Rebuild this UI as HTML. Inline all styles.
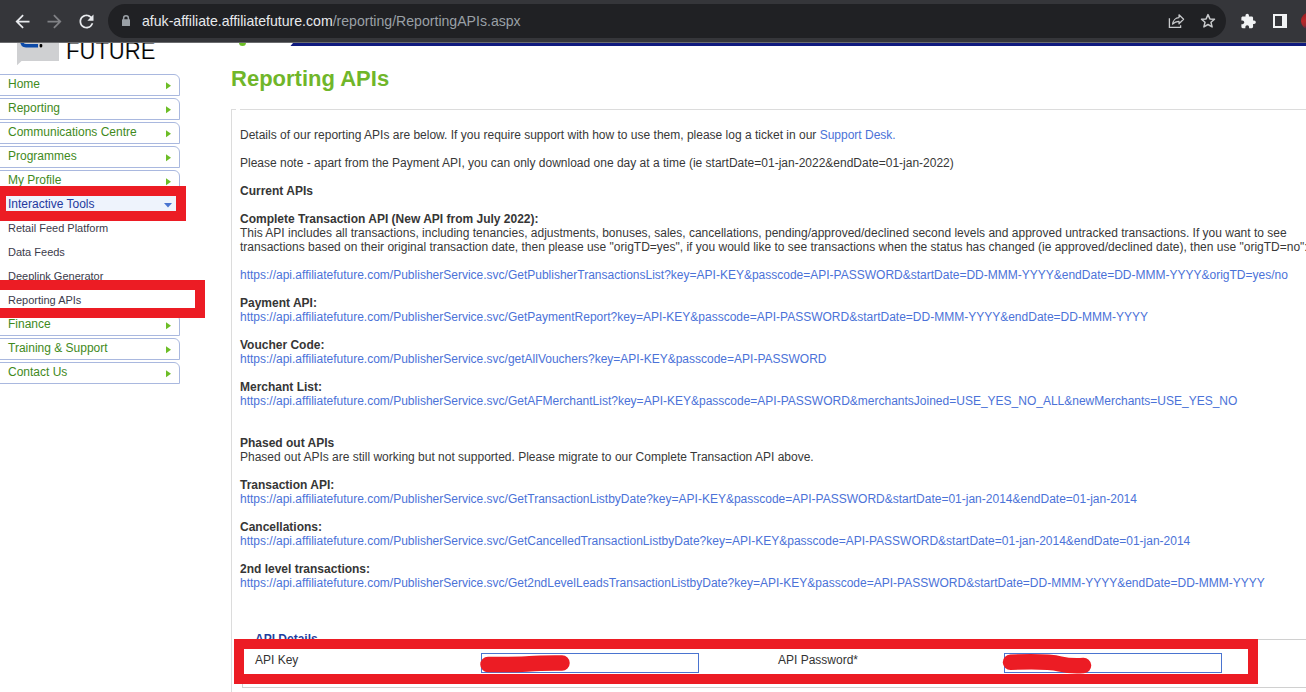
<!DOCTYPE html>
<html><head><meta charset="utf-8">
<style>
*{margin:0;padding:0;box-sizing:border-box}
html,body{width:1306px;height:692px;overflow:hidden;background:#fff;font-family:"Liberation Sans",sans-serif}
.abs{position:absolute}
#tb{z-index:10;position:absolute;left:0;top:0;width:1306px;height:43px;background:#35363a;border-bottom:1px solid #6a6b6e}
#pill{position:absolute;left:108px;top:4px;width:1118px;height:34px;border-radius:17px;background:#202124}
#url{position:absolute;left:142px;top:13px;font-size:14.1px;color:#e8eaed;white-space:nowrap;letter-spacing:0}
#url span{color:#9aa0a6}
.nav{position:absolute;left:-6px;width:186px;height:22px;border:1px solid #a9b8df;border-radius:0 6px 0 0;font-size:12px;color:#3f8a1c;padding-left:13px;line-height:19px}
.nav i{position:absolute;left:171px;top:7px;width:6px;height:8px;background:#6cbd26;clip-path:polygon(0 0.3px,5px 3.8px,0 7.3px)}
.nav b.dn{position:absolute;left:169px;top:8px;width:9px;height:5px;background:#4a74d0;clip-path:polygon(0 0,8px 0,4px 4.5px)}
.sub{position:absolute;left:8px;margin-top:1px;font-size:11px;color:#3b3b4b;white-space:nowrap}
.red{position:absolute;border:10px solid #ec1c24}
#content{position:absolute;left:240px;top:128px;font-size:12px;line-height:14px;color:#383838;white-space:nowrap}
#content b{color:#363636}
#content a{color:#4b72d8;text-decoration:none}
</style></head><body>
<!-- browser toolbar -->
<div id="tb">
  <svg class="abs" style="left:11.5px;top:10.5px" width="21" height="21" viewBox="0 0 24 24"><path fill="#e8eaed" d="M20 11H7.83l5.59-5.59L12 4l-8 8 8 8 1.41-1.41L7.83 13H20v-2z"/></svg>
  <svg class="abs" style="left:43.5px;top:10.5px" width="21" height="21" viewBox="0 0 24 24"><path fill="#808185" d="M12 4l-1.41 1.41L16.17 11H4v2h12.17l-5.58 5.59L12 20l8-8z"/></svg>
  <svg class="abs" style="left:75.5px;top:10.5px" width="21" height="21" viewBox="0 0 24 24"><path fill="#e8eaed" d="M17.65 6.35A7.958 7.958 0 0 0 12 4c-4.42 0-7.99 3.58-7.99 8s3.57 8 7.99 8c3.73 0 6.84-2.55 7.73-6h-2.08A5.990 5.990 0 0 1 12 18c-3.31 0-6-2.690-6-6s2.690-6 6-6c1.660 0 3.140.690 4.220 1.780L13 11h7V4l-2.350 2.350z"/></svg>
  <div id="pill"></div>
  <svg class="abs" style="left:121px;top:14px" width="10" height="13" viewBox="0 0 10 13"><path d="M2.6 6V4.2a2.4 2.4 0 0 1 4.8 0V6" fill="none" stroke="#9aa0a6" stroke-width="1.5"/><rect x="1" y="5.3" width="8" height="6.8" rx="0.6" fill="#9aa0a6"/></svg>
  <div id="url">afuk-affiliate.affiliatefuture.com<span>/reporting/ReportingAPIs.aspx</span></div>
  <svg class="abs" style="left:1166px;top:12px" width="20" height="18" viewBox="0 0 20 18"><path d="M3.4 6.2V15.4H14.6V13.2" fill="none" stroke="#c8cacc" stroke-width="1.3"/><path d="M6.6 12.2C7 8.6 9.5 5.6 13 5.6V2.8L17.6 7.3L13 11.8V9.3C10.2 9.3 8.2 10.4 6.6 12.2Z" fill="none" stroke="#c8cacc" stroke-width="1.2" stroke-linejoin="round"/></svg>
  <svg class="abs" style="left:1199px;top:12px" width="18" height="18" viewBox="0 0 18 18"><path d="M9 2.6L10.9 6.9L15.5 7.3L12 10.3L13.1 14.9L9 12.5L4.9 14.9L6 10.3L2.5 7.3L7.1 6.9Z" fill="none" stroke="#c8cacc" stroke-width="1.5" stroke-linejoin="round"/></svg>
  <svg class="abs" style="left:1239.5px;top:13px" width="16.5" height="16.5" viewBox="0 0 24 24"><path fill="#f1f3f4" d="M20.5 11H19V7c0-1.1-.9-2-2-2h-4V3.5C13 2.12 11.88 1 10.5 1S8 2.12 8 3.5V5H4c-1.1 0-1.99.9-1.99 2v3.8H3.5c1.49 0 2.7 1.21 2.7 2.7s-1.21 2.7-2.7 2.7H2V20c0 1.1.9 2 2 2h3.8v-1.5c0-1.49 1.21-2.7 2.7-2.7 1.49 0 2.7 1.21 2.7 2.7V22H17c1.1 0 2-.9 2-2v-4h1.5c1.38 0 2.5-1.12 2.5-2.5S21.88 11 20.5 11z"/></svg>
  <div class="abs" style="left:1273px;top:14px;width:14px;height:14px;border:2px solid #f1f3f4;border-right-width:5px"></div>
  <div class="abs" style="left:1301px;top:11.5px;width:18.5px;height:18.5px;border-radius:50%;background:linear-gradient(160deg,#8e1a1c 0,#b8282a 40%,#9a2a30 60%,#1d2f55 78%,#b03a3a 90%,#1a2850 100%)"></div>
</div>

<!-- logo -->
<svg class="abs" style="left:0;top:36px" width="70" height="32" viewBox="0 36 70 32"><path d="M17 42H59V61H21.5L17 65.2Z" fill="#cfd0d2"/><path d="M21.5 40C21.8 45 23.5 45.8 26 45.8H38" fill="none" stroke="#0c4aa8" stroke-width="3.4"/><rect x="39.6" y="43.9" width="2.7" height="3.5" rx="1.1" fill="#000"/></svg>
<div class="abs" style="left:66px;top:37px;font-size:24.5px;color:#000;transform-origin:0 0;transform:scaleX(0.9);-webkit-text-stroke:0.2px #fff">FUTURE</div>

<!-- nav -->
<div class="nav" style="top:74px">Home<i></i></div>
<div class="nav" style="top:98px">Reporting<i></i></div>
<div class="nav" style="top:122px">Communications Centre<i></i></div>
<div class="nav" style="top:146px">Programmes<i></i></div>
<div class="nav" style="top:170px">My Profile<i></i></div>

<div class="nav" style="top:194px;background:#eef3fc;color:#24399e">Interactive Tools<b class="dn"></b></div>
<div class="sub" style="top:221px">Retail Feed Platform</div>
<div class="sub" style="top:245px">Data Feeds</div>
<div class="sub" style="top:269px">Deeplink Generator</div>
<div class="sub" style="top:293px">Reporting APIs</div>

<div class="nav" style="top:314px">Finance<i></i></div>
<div class="nav" style="top:338px">Training &amp; Support<i></i></div>
<div class="nav" style="top:362px">Contact Us<i></i></div>

<div class="red" style="left:-4px;top:186px;width:190px;height:35px"></div>
<div class="red" style="left:-10px;top:280px;width:215px;height:38px"></div>

<div class="abs" style="left:239px;top:38.5px;width:7px;height:7px;border-radius:50%;background:#6cbf25"></div>
<svg class="abs" style="left:288px;top:43px" width="1018" height="3" viewBox="288 43 1018 3"><path d="M293 43H1306V46H290.5Z" fill="#0f1a7e"/></svg>
<!-- title -->
<div class="abs" style="left:231px;top:65.5px;font-size:23px;font-weight:bold;color:#70b62a;transform-origin:0 0;transform:scale(0.957,0.95)">Reporting APIs</div>

<!-- content border -->
<div class="abs" style="left:236px;top:109px;width:4px;height:1px;background:#fff;z-index:2"></div>
<div class="abs" style="left:231px;top:109px;width:1100px;height:700px;border-left:1px solid #dcdcdc;border-top:1px solid #dcdcdc"></div>

<div id="content">
Details of our reporting APIs are below. If you require support with how to use them, please log a ticket in our <a>Support Desk.</a><br><br>
Please note - apart from the Payment API, you can only download one day at a time (ie startDate=01-jan-2022&amp;endDate=01-jan-2022)<br><br>
<b>Current APIs</b><br><br>
<b>Complete Transaction API (New API from July 2022):</b><br>
This API includes all transactions, including tenancies, adjustments, bonuses, sales, cancellations, pending/approved/declined second levels and approved untracked transactions. If you want to see<br>
transactions based on their original transaction date, then please use "origTD=yes", if you would like to see transactions when the status has changed (ie approved/declined date), then use "origTD=no":<br><br>
<a>https://api.affiliatefuture.com/PublisherService.svc/GetPublisherTransactionsList?key=API-KEY&amp;passcode=API-PASSWORD&amp;startDate=DD-MMM-YYYY&amp;endDate=DD-MMM-YYYY&amp;origTD=yes/no</a><br><br>
<b>Payment API:</b><br>
<a>https://api.affiliatefuture.com/PublisherService.svc/GetPaymentReport?key=API-KEY&amp;passcode=API-PASSWORD&amp;startDate=DD-MMM-YYYY&amp;endDate=DD-MMM-YYYY</a><br><br>
<b>Voucher Code:</b><br>
<a>https://api.affiliatefuture.com/PublisherService.svc/getAllVouchers?key=API-KEY&amp;passcode=API-PASSWORD</a><br><br>
<b>Merchant List:</b><br>
<a>https://api.affiliatefuture.com/PublisherService.svc/GetAFMerchantList?key=API-KEY&amp;passcode=API-PASSWORD&amp;merchantsJoined=USE_YES_NO_ALL&amp;newMerchants=USE_YES_NO</a><br><br><br>
<b>Phased out APIs</b><br>
Phased out APIs are still working but not supported. Please migrate to our Complete Transaction API above.<br><br>
<b>Transaction API:</b><br>
<a>https://api.affiliatefuture.com/PublisherService.svc/GetTransactionListbyDate?key=API-KEY&amp;passcode=API-PASSWORD&amp;startDate=01-jan-2014&amp;endDate=01-jan-2014</a><br><br>
<b>Cancellations:</b><br>
<a>https://api.affiliatefuture.com/PublisherService.svc/GetCancelledTransactionListbyDate?key=API-KEY&amp;passcode=API-PASSWORD&amp;startDate=01-jan-2014&amp;endDate=01-jan-2014</a><br><br>
<b>2nd level transactions:</b><br>
<a>https://api.affiliatefuture.com/PublisherService.svc/Get2ndLevelLeadsTransactionListbyDate?key=API-KEY&amp;passcode=API-PASSWORD&amp;startDate=DD-MMM-YYYY&amp;endDate=DD-MMM-YYYY</a>
</div>

<!-- API details -->
<div class="abs" style="left:255px;top:632px;font-size:12px;font-weight:bold;color:#1f3f9f">API Details</div>
<div class="abs" style="left:242px;top:639px;width:1100px;height:49px;border-top:1px solid #d0d0d0;border-bottom:1px solid #d0d0d0;border-left:1px solid #d0d0d0"></div>
<div class="abs" style="left:255px;top:653px;font-size:12px;color:#333">API Key</div>
<div class="abs" style="left:778px;top:653px;font-size:12px;color:#333">API Password*</div>
<div class="abs" style="left:481px;top:653px;width:218px;height:20px;border:1px solid #4a74d0"></div>
<div class="abs" style="left:1004px;top:653px;width:218px;height:20px;border:1px solid #4a74d0"></div>
<div class="red" style="left:234px;top:639px;width:1024px;height:45px"></div>

<div class="abs" style="left:1069px;top:657.5px;width:6px;height:1.5px;background:#777;z-index:4"></div>
<svg class="abs" style="left:0;top:0;z-index:5" width="1306" height="692"><g fill="none" stroke="#ec1c24" stroke-width="15.5" stroke-linecap="round" stroke-linejoin="round"><path d="M488 664.5C510 664.5 522 664.8 530 663.8C540 662.8 550 663 562 663"/><path d="M1010.5 662.3C1030 661.5 1048 661.2 1060 664C1068 665.8 1075 666 1083.5 665.5"/></g></svg>
</body></html>
